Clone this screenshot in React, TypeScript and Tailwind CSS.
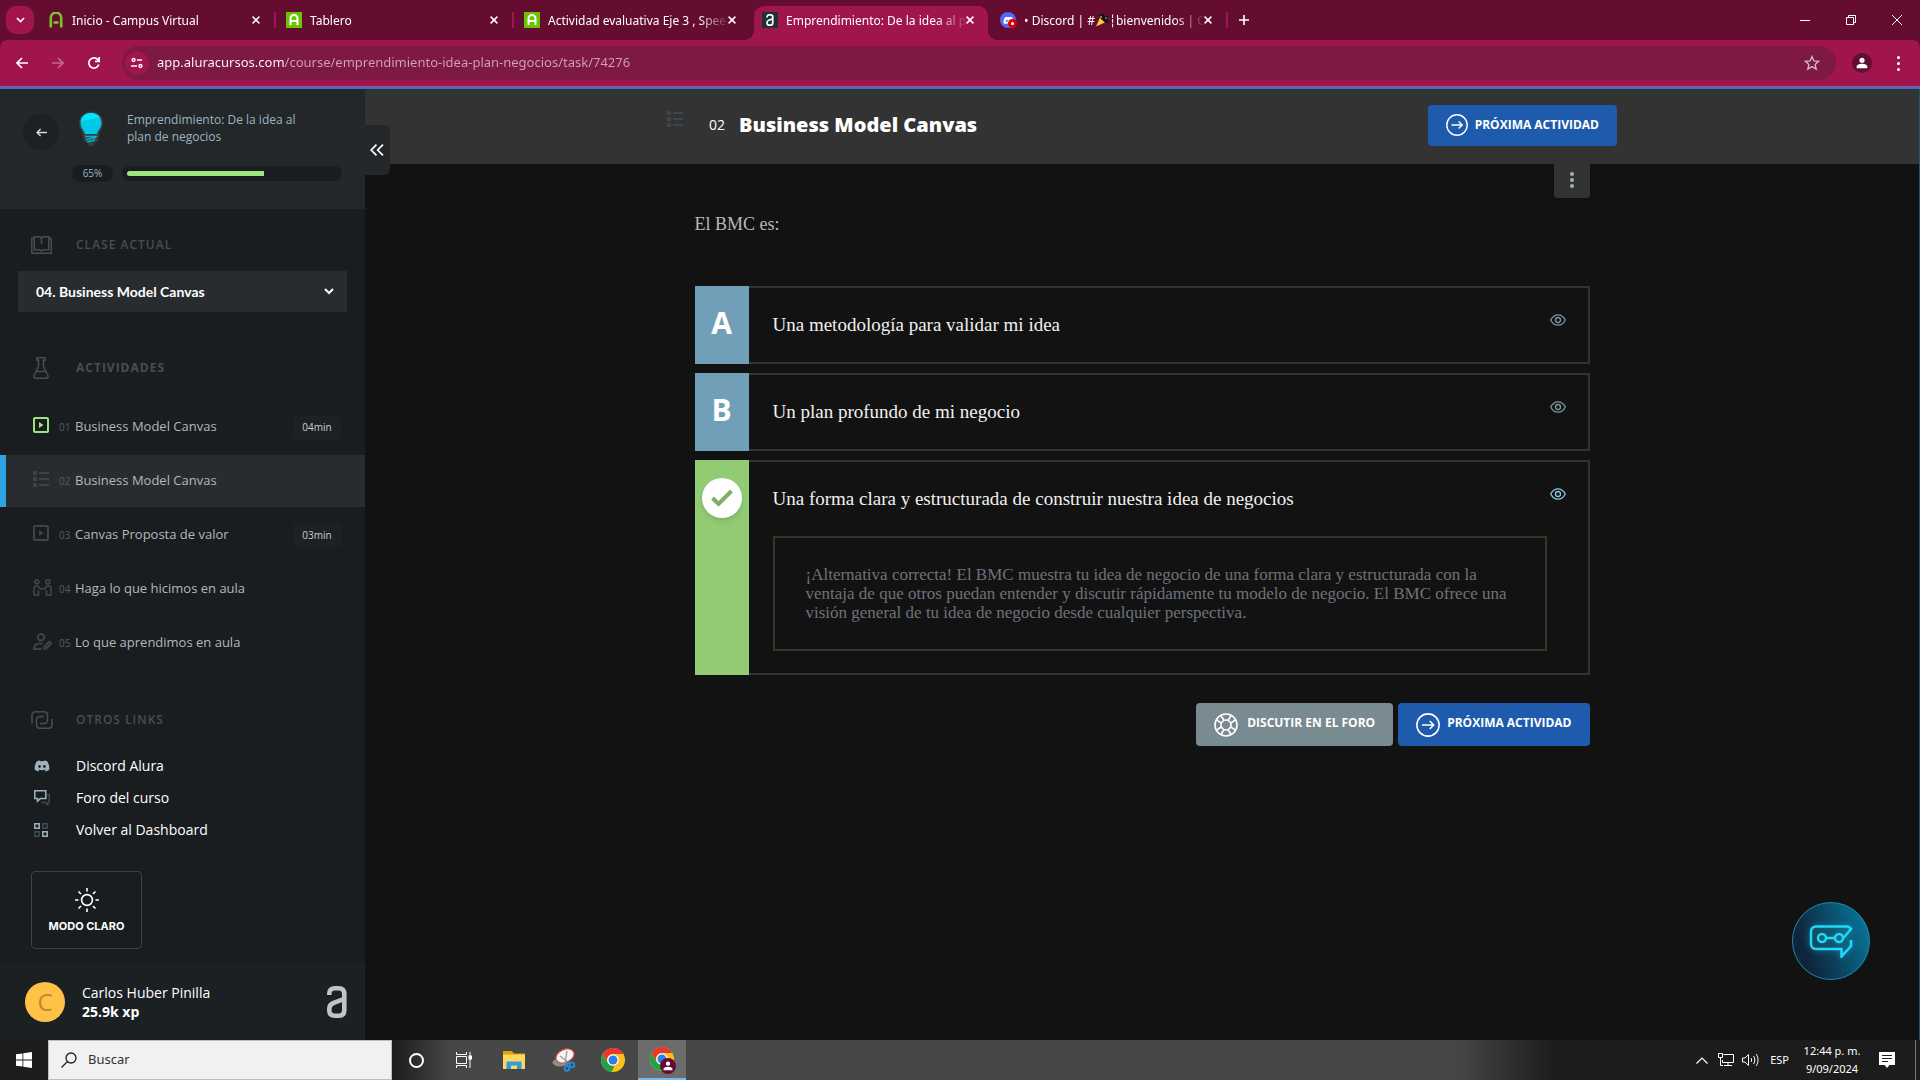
import React, { ReactNode } from "react";
import { FaDiscord } from "react-icons/fa";

/* ---------- Icons ---------- */

type IconProps = { className?: string };

const CloseIcon = ({ className = "" }: IconProps) => (
  <svg viewBox="0 0 8 8" className={className} fill="none" stroke="currentColor" strokeWidth="1.5">
    <path d="M.6.6l6.8 6.8M7.4.6L.6 7.4" />
  </svg>
);

const GreenA = ({ boxed }: { boxed?: boolean }) => (
  <svg viewBox="0 0 16 16" className="w-4 h-4 shrink-0" fill="none">
    {boxed && <rect width="16" height="16" fill="#6cc300" />}
    <path
      d={boxed ? "M4.5 13V6.5a3.5 3.5 0 0 1 7 0V13M4.5 9h7" : "M2.8 15.5V5.8a5.2 5.2 0 0 1 10.4 0v9.7M5.5 10.5h5"}
      stroke={boxed ? "#fff" : "#7cc32b"}
      strokeWidth={boxed ? 2 : 2.6}
    />
  </svg>
);

const AluraMark = ({ className = "" }: IconProps) => (
  <svg viewBox="0 0 20 32" className={className} fill="none" stroke="currentColor" strokeWidth="4.6">
    <path d="M2.3 9V7.500C2.300 4 4.500 2.300 8 2.300h3.500c4 0 5.800 2 5.800 5.700v16c0 3.700-1.800 5.700-5.300 5.700H8c-3.800 0-5.700-2-5.700-5.200v-2c0-3 1.500-4.600 4.400-5.700l10.600-4" />
  </svg>
);

const AluraFavicon = () => (
  <span className="flex w-4 h-4 shrink-0 items-center justify-center bg-[#1f3138] text-white">
    <AluraMark className="w-[8px] h-[12px]" />
  </span>
);

const DiscordFavicon = () => (
  <span className="relative w-4 h-4 shrink-0 rounded-full bg-[#5865f2] flex items-center justify-center">
    <FaDiscord className="w-[11px] h-[11px] text-white" />
    <span className="absolute -right-px bottom-0 w-[9px] h-[9px] rounded-full bg-[#e00000] flex items-center justify-center">
      <span className="w-[3px] h-[3px] rounded-full bg-white" />
    </span>
  </span>
);

const PartyPopper = () => (
  <svg viewBox="0 0 14 14" className="inline-block w-[14px] h-[14px] align-[-2px]">
    <path d="M1 13.500L5 4.500 10 9.500z" fill="#ffc83d" />
    <path d="M3 0l3 2.500 2-2.500 1.500 3 4 0-1.500 2.500L14 10l-4-.5L4.500 4.500z" fill="#16130f" />
    <circle cx="6" cy="4" r="1" fill="#e8a33d" />
    <circle cx="11" cy="5" r="1" fill="#3f8fd8" />
  </svg>
);

const ListIcon = () => (
  <svg viewBox="0 0 16 16" className="w-4 h-4" fill="currentColor">
    <rect width="4" height="4" rx=".5" />
    <rect y="6" width="4" height="4" rx=".5" />
    <rect y="12" width="4" height="4" rx=".5" />
    <rect x="6" y="1" width="10" height="2" />
    <rect x="6" y="7" width="10" height="2" />
    <rect x="6" y="13" width="10" height="2" />
  </svg>
);

const VideoIcon = () => (
  <svg viewBox="0 0 16 16" className="w-4 h-4">
    <rect x="1" y="1" width="14" height="14" rx="1" fill="none" stroke="currentColor" strokeWidth="2" />
    <path d="M6 5l4.500 3L6 11z" fill="currentColor" />
  </svg>
);

const PairIcon = () => (
  <svg viewBox="0 0 19 17" className="w-[19px] h-[17px]" fill="none" stroke="currentColor" strokeWidth="1.700">
    <circle cx="3.800" cy="2.800" r="2" />
    <circle cx="14.800" cy="2.800" r="2" />
    <path d="M1 16.200V9.500C1 7.500 2 6.800 3.600 6.800c1.700 0 2.400 1 3.400 2.900l2.500.2M1 16.200h4.500v-5M18 16.200V9.500c0-2-1-2.700-2.800-2.700-1.700 0-2.400 1-3.400 2.900l-2.300.2M18 16.200h-4.500v-5" />
  </svg>
);

const UserEditIcon = () => (
  <svg viewBox="0 0 19 17" className="w-[19px] h-[17px]" fill="none" stroke="currentColor" strokeWidth="2">
    <circle cx="8" cy="4.200" r="3.200" />
    <path d="M8.500 16H1c.3-3.500 2-5.400 5-5.400h3.500M11.200 16l.5-2.800 4.600-4.500 1.800 1.900-4.500 4.600z" />
  </svg>
);

const BookIcon = () => (
  <svg viewBox="0 0 21 18" className="w-[21px] h-[18px]" fill="none" stroke="currentColor" strokeWidth="1.500">
    <path d="M3 2.500H.8v14.700h19.400V2.500H18M3.300.8v13h5.500l1.700 1.200 1.700-1.200h5.500V.8h-5.500l-1.700 1.200L8.800.8zM10.500 2v6" />
  </svg>
);

const FlaskIcon = () => (
  <svg viewBox="0 0 16 22" className="w-4 h-[22px]" fill="none" stroke="currentColor" strokeWidth="1.500">
    <path d="M4 .8h8v2.400h-1.500v6.300l4.300 8.700c.7 1.600 0 3-1.500 3H2.700c-1.500 0-2.200-1.400-1.500-3l4.300-8.700V3.200H4zM3.500 14.500h9" />
  </svg>
);

const LinksIcon = () => (
  <svg viewBox="0 0 22 18" className="w-[22px] h-[18px]" fill="none" stroke="currentColor" strokeWidth="1.500">
    <path d="M1 12.500V4a3.200 3.200 0 0 1 3.200-3.200h9.100a3.200 3.200 0 0 1 3.200 3.200v5.200a3.200 3.200 0 0 1-3.200 3.200H9" />
    <path d="M13 5.500H8.700A3.200 3.200 0 0 0 5.500 8.700V14a3.200 3.200 0 0 0 3.200 3.200h9.100A3.200 3.200 0 0 0 21 14V8" />
  </svg>
);

const ForumIcon = () => (
  <svg viewBox="0 0 16 16" className="w-4 h-4" fill="none" strokeWidth="1.500">
    <path d="M13 4.800h2.300v7.700h-1.500v2.300l-2.600-2.300H7.500" stroke="#41494e" />
    <path d="M.8.8h11v7.800H6.300l-2.800 2.600V8.600H.8z" stroke="#9db4c0" />
  </svg>
);

const DashboardIcon = () => (
  <svg viewBox="0 0 14 14" className="w-[14px] h-[14px]" fill="none" strokeWidth="1.500">
    <path d="M.8.8h4.400v4.400H.8zM8.800 8.800h4.400v4.400H8.800z" stroke="#9db4c0" />
    <path d="M8.800.8h4.400v4.400H8.800zM.8 8.800h4.400v4.400H.8z" stroke="#41494e" />
  </svg>
);

const SunIcon = () => (
  <svg viewBox="0 0 24 24" className="w-6 h-6" fill="none" stroke="currentColor" strokeWidth="1.600">
    <circle cx="12" cy="12" r="5.400" />
    <path d="M12 0v3.500M12 20.500V24M0 12h3.500M20.500 12H24M3.500 3.500L6 6M18 18l2.500 2.500M3.500 20.500L6 18M18 6l2.500-2.500" />
  </svg>
);

const BulbIcon = () => (
  <svg viewBox="0 0 26 36" className="w-[26px] h-9">
    <path d="M13 .5C6 .5 1 5.500 1 12c0 4.500 2 7 3.500 10l1.500 8 4 2 1 3h4l1-3 4-2 1.500-8C23 19 25 16.500 25 12 25 5.500 20 .5 13 .5z" fill="#3a3f42" />
    <path d="M13 2C7 2 2.500 6.200 2.500 12c0 4.500 3.500 7 4.500 11h12c1-4 4.500-6.500 4.500-11C23.500 6.200 19 2 13 2z" fill="#00c8e6" />
    <path d="M13 2C7.500 2 3.300 5.500 2.700 10.500L22 6.500C20 3.600 17 2 13 2z" fill="#00e5ff" />
    <path d="M7 25.500h12M8 28.500l10-2M9 31l8-2" stroke="#00b4d8" strokeWidth="1.500" fill="none" />
  </svg>
);

const ArrowCircleIcon = ({ className = "" }: IconProps) => (
  <svg viewBox="0 0 22 22" className={className} fill="none" stroke="currentColor" strokeWidth="1.400">
    <circle cx="11" cy="11" r="10.200" />
    <path d="M5.500 11h10.700M12.600 7.400l3.600 3.600-3.600 3.600" />
  </svg>
);

const LifebuoyIcon = ({ className = "" }: IconProps) => (
  <svg viewBox="0 0 24 24" className={className} fill="none" stroke="currentColor" strokeWidth="1.600">
    <circle cx="12" cy="12" r="11" />
    <circle cx="12" cy="12" r="5" />
    <path d="M7.200 10L2.500 6.800M10 7.200L6.800 2.500M14 7.200l3.200-4.700M16.800 10l4.700-3.200M16.800 14l4.700 3.200M14 16.800l3.200 4.700M10 16.800l-3.200 4.700M7.200 14l-4.700 3.200" />
  </svg>
);

const EyeIcon = () => (
  <svg viewBox="0 0 16 12" className="w-4 h-3" fill="none" stroke="currentColor" strokeWidth="1.300">
    <path d="M.7 6C2.500 2.500 5 .8 8 .8S13.500 2.500 15.300 6C13.500 9.500 11 11.200 8 11.200S2.500 9.500.7 6z" />
    <circle cx="8" cy="6" r="2.500" />
  </svg>
);

const ChromeIcon = () => (
  <svg viewBox="0 0 24 24" className="w-6 h-6">
    <circle cx="12" cy="12" r="12" fill="#fbc116" />
    <path d="M1.600 6A12 12 0 0 1 22.400 6H12a6 6 0 0 0-5.200 9z" fill="#e8372c" />
    <path d="M1.600 6l5.200 9A6 6 0 0 0 12 18l1.500-.2L10.500 23.900A12 12 0 0 1 1.600 6z" fill="#1fa24a" />
    <circle cx="12" cy="12" r="5.800" fill="#fff" />
    <circle cx="12" cy="12" r="4.500" fill="#2f7de9" />
  </svg>
);

const PersonIcon = ({ className = "" }: IconProps) => (
  <svg viewBox="0 0 14 14" className={className} fill="currentColor">
    <circle cx="7" cy="3.800" r="3" />
    <path d="M.8 13v-2c0-2 4-3 6.200-3s6.200 1 6.200 3v2z" />
  </svg>
);

/* ---------- Browser ---------- */

const tabs: { id: string; title: ReactNode; icon: ReactNode; active?: boolean; line?: boolean }[] = [
  { id: "campus", title: "Inicio - Campus Virtual", icon: <GreenA />, line: true },
  { id: "tablero", title: "Tablero", icon: <GreenA boxed />, line: true },
  { id: "eje3", title: "Actividad evaluativa Eje 3 , Spee", icon: <GreenA boxed /> },
  { id: "alura", title: "Emprendimiento: De la idea al p", icon: <AluraFavicon />, active: true },
  {
    id: "discord",
    title: (
      <>
        • Discord | #<PartyPopper />┆bienvenidos | C
      </>
    ),
    icon: <DiscordFavicon />,
    line: true,
  },
];

function Browser() {
  return (
    <header className="font-['Noto_Sans',sans-serif] text-white">
      <div className="flex h-10 bg-[#640d30]">
        <div className="w-[38px] shrink-0 pl-[6px] pt-[6px]">
          <button aria-label="Buscar pestañas" className="flex w-7 h-7 items-center justify-center rounded-[10px] bg-[#a0154e]">
            <svg viewBox="0 0 10 6" className="w-[9px] h-[6px]" fill="none" stroke="currentColor" strokeWidth="1.800">
              <path d="M1 .8l4 4 4-4" />
            </svg>
          </button>
        </div>
        <div className="flex min-w-0">
          {tabs.map((tab) => (
            <div key={tab.id} className="relative w-[238px] pt-[6px]">
              <div
                className={`flex items-center h-[34px] pb-[6px] ${
                  tab.active ? "mx-[2px] pl-[8px] pr-[14px] rounded-t-[10px] bg-[#a0154e]" : "pl-[10px] pr-[16px]"
                }`}
              >
                {tab.icon}
                <a
                  href="#"
                  className="ml-2 pt-px flex-1 min-w-0 whitespace-nowrap text-xs [mask-image:linear-gradient(90deg,#000_150px,transparent_182px)]"
                >
                  {tab.title}
                </a>
                <button aria-label="Cerrar pestaña">
                  <CloseIcon className="w-2 h-2" />
                </button>
              </div>
              {tab.active && (
                <>
                  <span className="absolute bottom-0 -left-[8px] w-[10px] h-[10px] bg-[radial-gradient(circle_at_0_0,transparent_10px,#a0154e_10px)]" />
                  <span className="absolute bottom-0 -right-[8px] w-[10px] h-[10px] bg-[radial-gradient(circle_at_100%_0,transparent_10px,#a0154e_10px)]" />
                </>
              )}
              {tab.line && <span className="absolute right-0 top-3 w-[2px] h-4 bg-[#a0154e]" />}
            </div>
          ))}
          <button aria-label="Nueva pestaña" className="w-8 flex items-center justify-center">
            <svg viewBox="0 0 10 10" className="w-[10px] h-[10px]" stroke="currentColor" strokeWidth="1.600">
              <path d="M5 0v10M0 5h10" />
            </svg>
          </button>
        </div>
        <div className="ml-auto flex">
          <button aria-label="Minimizar" className="w-[46px] flex items-center justify-center">
            <span className="w-[10px] h-px bg-white" />
          </button>
          <button aria-label="Restaurar" className="w-[46px] flex items-center justify-center">
            <svg viewBox="0 0 10 10" className="w-[10px] h-[10px]" fill="none" stroke="currentColor">
              <path d="M.5 2.500h7v7h-7zM2.500 2.500v-2h7v7h-2" />
            </svg>
          </button>
          <button aria-label="Cerrar" className="w-[46px] flex items-center justify-center">
            <svg viewBox="0 0 10 10" className="w-[10px] h-[10px]" stroke="currentColor">
              <path d="M0 0l10 10M10 0L0 10" />
            </svg>
          </button>
        </div>
      </div>

      <div className="bg-[#640d30]">
        <div className="flex items-center h-[46px] rounded-t-lg bg-[#a0154e] pl-1 pr-1">
          <button aria-label="Atrás" className="w-9 flex justify-center">
            <svg viewBox="0 0 12 12" className="w-3 h-3" fill="none" stroke="currentColor" strokeWidth="1.600">
              <path d="M12 6H1M6 1L1 6l5 5" />
            </svg>
          </button>
          <button aria-label="Adelante" className="w-9 flex justify-center text-[#c46a90]">
            <svg viewBox="0 0 12 12" className="w-3 h-3" fill="none" stroke="currentColor" strokeWidth="1.600">
              <path d="M0 6h11M6 1l5 5-5 5" />
            </svg>
          </button>
          <button aria-label="Recargar" className="w-9 flex justify-center">
            <svg viewBox="0 0 12 12" className="w-3 h-3" fill="none" stroke="currentColor" strokeWidth="1.700">
              <path d="M10.800 7.500A5.100 5.100 0 1 1 9.800 2.600L11 4M11.200 0v4.300H7" />
            </svg>
          </button>
          <div className="ml-[10px] flex flex-1 items-center h-[34px] rounded-full bg-[#7d1942] pl-[3px] pr-4">
            <button aria-label="Información del sitio" className="flex w-6 h-6 items-center justify-center rounded-full bg-[#a0154e]">
              <svg viewBox="0 0 14 12" className="w-3 h-3" fill="none" stroke="currentColor" strokeWidth="1.600">
                <circle cx="3" cy="2.500" r="1.700" />
                <path d="M7 2.500h6M0 9.500h7" />
                <circle cx="11" cy="9.500" r="1.700" />
              </svg>
            </button>
            <input
              aria-label="Barra de direcciones"
              defaultValue="app.aluracursos.com/course/emprendimiento-idea-plan-negocios/task/74276"
              className="ml-2 flex-1 bg-[linear-gradient(90deg,#fff_128px,#d2a2b7_128px)] bg-clip-text text-transparent text-[13px] outline-none"
            />
            <button aria-label="Marcar esta página" className="text-[#d5b9c5]">
              <svg viewBox="0 0 16 16" className="w-4 h-4" fill="none" stroke="currentColor" strokeWidth="1.300">
                <path d="M8 1.500l1.900 4.400 4.800.4-3.600 3.100 1.100 4.700L8 11.600l-4.200 2.500 1.100-4.700-3.600-3.100 4.800-.4z" />
              </svg>
            </button>
          </div>
          <button aria-label="Perfil" className="ml-4 flex w-5 h-5 items-center justify-center rounded-full bg-[#640d30]">
            <PersonIcon className="w-3 h-3" />
          </button>
          <button aria-label="Menú" className="ml-2 w-9 flex flex-col items-center gap-[3px]">
            <span className="w-[3px] h-[3px] rounded-full bg-white" />
            <span className="w-[3px] h-[3px] rounded-full bg-white" />
            <span className="w-[3px] h-[3px] rounded-full bg-white" />
          </button>
        </div>
      </div>
      <div className="h-[3px] border-t border-[#b8487a] bg-[#2f76d2]" />
    </header>
  );
}

/* ---------- Sidebar ---------- */

const activities = [
  { num: "01", name: "Business Model Canvas", time: "04min", icon: <VideoIcon />, done: true },
  { num: "02", name: "Business Model Canvas", icon: <ListIcon />, current: true },
  { num: "03", name: "Canvas Proposta de valor", time: "03min", icon: <VideoIcon /> },
  { num: "04", name: "Haga lo que hicimos en aula", icon: <PairIcon /> },
  { num: "05", name: "Lo que aprendimos en aula", icon: <UserEditIcon /> },
];

const links = [
  { name: "Discord Alura", icon: <FaDiscord className="w-4 h-4 text-[#9db4c0]" /> },
  { name: "Foro del curso", icon: <ForumIcon /> },
  { name: "Volver al Dashboard", icon: <DashboardIcon /> },
];

function SectionTitle({ icon, bold, children }: { icon: ReactNode; bold?: boolean; children: ReactNode }) {
  return (
    <h2
      className={`flex items-center h-6 pl-[31px] text-xs tracking-[1px] text-[#454f53] ${
        bold ? "font-bold" : "font-semibold"
      }`}
    >
      <span className="w-[45px]">{icon}</span>
      {children}
    </h2>
  );
}

function Sidebar() {
  const progress = 65;

  return (
    <aside className="relative flex flex-col w-[365px] shrink-0 bg-[#191d20]">
      <div className="flex h-[120px] bg-[#23272a] pt-[22px] pl-[23px]">
        <a href="#" aria-label="Volver" className="mt-[3px] flex w-9 h-9 items-center justify-center rounded-full bg-[#1d2123] text-[#d6dcdf]">
          <svg viewBox="0 0 12 10" className="w-[11px] h-[9px]" fill="none" stroke="currentColor" strokeWidth="1.500">
            <path d="M12 5H1M5 1L1 5l4 4" />
          </svg>
        </a>
        <div className="ml-[13px] w-[270px]">
          <div className="flex">
            <span className="pl-[6px] w-[55px]">
              <BulbIcon />
            </span>
            <a href="#" className="w-[180px] text-xs leading-[17px] text-[#9db4c0]">
              Emprendimiento: De la idea al plan de negocios
            </a>
          </div>
          <div className="mt-[18px] flex items-center">
            <span className="w-[41px] h-[17px] rounded-full bg-[#191d20] text-center text-[10px] leading-[17px] text-[#9db4c0]">
              {progress}%
            </span>
            <div
              role="progressbar"
              aria-label="Progreso del curso"
              aria-valuenow={progress}
              className="ml-[9px] flex-1 h-[15px] rounded-full bg-[#191d20] p-[5px]"
            >
              <div className="h-[5px] rounded-l-full bg-[#9ee57d]" style={{ width: `${progress}%` }} />
            </div>
          </div>
        </div>
      </div>

      <button
        aria-label="Ocultar menú"
        className="absolute left-full top-9 z-10 flex w-[25px] h-[50px] items-center justify-center rounded-r-md bg-[#23272a] pr-[2px] text-white"
      >
        <svg viewBox="0 0 14 12" className="w-[14px] h-3" fill="none" stroke="currentColor" strokeWidth="1.700">
          <path d="M6.500.6L1.200 6l5.300 5.400M13 .6L7.700 6l5.300 5.400" />
        </svg>
      </button>

      <div className="pt-6">
        <SectionTitle icon={<BookIcon />}>CLASE ACTUAL</SectionTitle>
        <div className="relative mt-[14px] mx-[18px]">
          <select
            aria-label="Clase actual"
            className="w-full h-[41px] appearance-none bg-[#282c2f] pl-[18px] font-['Lato',sans-serif] text-sm font-bold text-white"
          >
            <option>04. Business Model Canvas</option>
          </select>
          <svg
            viewBox="0 0 10 7"
            className="pointer-events-none absolute right-[13px] top-[17px] w-[10px] h-[7px] text-white"
            fill="none"
            stroke="currentColor"
            strokeWidth="2"
          >
            <path d="M1 1l4 4 4-4" />
          </svg>
        </div>
      </div>

      <div className="mt-11">
        <SectionTitle bold icon={<span className="block pl-[2px]"><FlaskIcon /></span>}>
          ACTIVIDADES
        </SectionTitle>
        <ul className="mt-[21px] flex flex-col gap-[2px]">
          {activities.map((a) => (
            <li key={a.num}>
              <a
                href="#"
                className={`flex items-center h-[52px] border-l-[6px] pl-[27px] pr-6 ${
                  a.current ? "border-[#2fa4e2] bg-[#282c2f]" : "border-transparent"
                }`}
              >
                <span className={`w-[26px] pb-1 ${a.done ? "text-[#9ee57d]" : "text-[#3a444b]"}`}>{a.icon}</span>
                <span className="w-4 text-[10px] text-[#545c61]">{a.num}</span>
                <span className="text-[13px] text-[#b4b8ba]">{a.name}</span>
                {a.time && (
                  <span className="ml-auto w-12 h-6 rounded bg-[#1d2123] text-center text-[10px] leading-6 text-[#c9cdcf]">
                    {a.time}
                  </span>
                )}
              </a>
            </li>
          ))}
        </ul>
      </div>

      <div className="mt-[39px]">
        <SectionTitle icon={<LinksIcon />}>OTROS LINKS</SectionTitle>
        <ul className="mt-[18px]">
          {links.map((l) => (
            <li key={l.name}>
              <a href="#" className="flex items-center h-8 pl-[34px] text-sm text-white">
                <span className="w-[42px]">{l.icon}</span>
                {l.name}
              </a>
            </li>
          ))}
        </ul>
      </div>

      <button className="mt-[25px] ml-[31px] flex flex-col items-center w-[111px] h-[78px] rounded border border-[#3c4246] pt-4 text-white">
        <SunIcon />
        <span className="mt-[6px] font-['Inter',sans-serif] text-[11px] leading-4 font-bold">MODO CLARO</span>
      </button>

      <div className="mt-auto flex items-center h-[76px] bg-[#1b2123] pl-[25px] pr-[18px] text-sm leading-[19px] text-white">
        <span className="flex w-10 h-10 items-center justify-center rounded-full bg-[#ffc247] text-2xl text-[#c08a2c]">C</span>
        <p className="ml-[17px]">
          Carlos Huber Pinilla
          <br />
          <strong>25.9k xp</strong>
        </p>
        <AluraMark className="ml-auto w-5 h-8 text-[#bfc4c7]" />
      </div>
    </aside>
  );
}

/* ---------- Task ---------- */

const options = [
  { letter: "A", text: "Una metodología para validar mi idea" },
  { letter: "B", text: "Un plan profundo de mi negocio" },
  {
    letter: "C",
    text: "Una forma clara y estructurada de construir nuestra idea de negocios",
    feedback:
      "¡Alternativa correcta! El BMC muestra tu idea de negocio de una forma clara y estructurada con la ventaja de que otros puedan entender y discutir rápidamente tu modelo de negocio. El BMC ofrece una visión general de tu idea de negocio desde cualquier perspectiva.",
  },
];

function Task() {
  return (
    <main className="flex-1 bg-[#121212] border-r border-[#155a70]">
      <div className="h-[75px] bg-[#333333]">
        <div className="mx-auto flex items-center h-[72px] max-w-[950px] text-white">
          <span className="w-[42px] pb-3 text-[#3e474d]">
            <ListIcon />
          </span>
          <span className="w-[30px] text-sm font-medium">02</span>
          <h1 className="text-xl font-extrabold">Business Model Canvas</h1>
          <a href="#" className="ml-auto flex items-center h-[41px] rounded bg-[#1f5bac] px-[18px] text-xs font-bold">
            <ArrowCircleIcon className="w-[22px] h-[22px] mr-[7px]" />
            PRÓXIMA ACTIVIDAD
          </a>
        </div>
      </div>

      <div className="relative mx-auto max-w-[895px] pt-12">
        <button
          aria-label="Opciones"
          className="absolute right-0 top-0 flex flex-col w-9 h-[34px] items-center justify-center gap-[2px] rounded-b bg-[#333333] pb-[2px]"
        >
          <span className="w-1 h-1 rounded-full bg-[#9db4c0]" />
          <span className="w-1 h-1 rounded-full bg-[#9db4c0]" />
          <span className="w-1 h-1 rounded-full bg-[#9db4c0]" />
        </button>

        <p className="font-['Liberation_Serif',serif] text-lg leading-6 text-[#b9b9b9]">El BMC es:</p>

        <ul className="mt-[50px] flex flex-col gap-[9px]">
          {options.map((o) => (
            <li key={o.letter} className="flex">
              {o.feedback ? (
                <span className="w-[54px] flex justify-center bg-[#91cb74] pt-[18px]">
                  <span className="flex w-10 h-10 items-center justify-center rounded-full bg-white shadow-md">
                    <svg viewBox="0 0 22 18" className="w-[22px] h-[18px]" fill="none" stroke="#7fae68" strokeWidth="4">
                      <path d="M1.500 9l6 6L20.500 2" />
                    </svg>
                  </span>
                </span>
              ) : (
                <span className="w-[54px] flex items-center justify-center bg-[#729fb8] pb-1 text-3xl font-bold text-white">
                  {o.letter}
                </span>
              )}
              <div className="flex-1 border-2 border-l-0 border-[#333333] pl-6">
                <div className="flex h-[74px] items-center pr-[22px]">
                  <p className="font-['Liberation_Serif',serif] text-[19px] text-[#f0f0f0]">{o.text}</p>
                  <button aria-label="Ver opinión" className={`ml-auto pb-[10px] ${o.feedback ? "text-[#84c8e8]" : "text-[#7d97a3]"}`}>
                    <EyeIcon />
                  </button>
                </div>
                {o.feedback && (
                  <p className="mb-[22px] mr-[41px] border-2 border-[#2c3b25] px-[31px] py-[27px] font-['Liberation_Serif',serif] text-[17px] leading-[19px] text-[#6c737a]">
                    {o.feedback}
                  </p>
                )}
              </div>
            </li>
          ))}
        </ul>

        <div className="mt-7 flex justify-end gap-[5px] text-xs font-bold text-white">
          <a href="#" className="flex items-center h-[43px] rounded bg-[#7a8a91] px-[18px]">
            <LifebuoyIcon className="w-6 h-6 mr-[9px]" />
            <span className="pb-[3px]">DISCUTIR EN EL FORO</span>
          </a>
          <a href="#" className="flex items-center h-[43px] rounded bg-[#1f5bac] px-[18px]">
            <ArrowCircleIcon className="w-6 h-6 mr-[7px]" />
            <span className="pb-[3px]">PRÓXIMA ACTIVIDAD</span>
          </a>
        </div>
      </div>
    </main>
  );
}

/* ---------- Windows taskbar ---------- */

function Taskbar() {
  return (
    <footer className="flex h-10 bg-[linear-gradient(90deg,#1c1c1c_0,#1c1c1c_392px,#474747_450px,#454545_76%,#1c1c1c_81%)] font-['Noto_Sans',sans-serif] text-white">
      <button aria-label="Inicio" className="w-12 flex items-center justify-center">
        <svg viewBox="0 0 16 16" className="w-4 h-4" fill="currentColor">
          <path d="M0 2.300l6.500-.9v6.200H0zM7.300 1.300L16 0v7.600H7.300zM0 8.400h6.500v6.200L0 13.700zM7.300 8.400H16V16l-8.700-1.300z" />
        </svg>
      </button>
      <label className="flex items-center w-[344px] border border-[#bdbdbd] bg-[#f1f1f1] pl-3">
        <svg viewBox="0 0 16 16" className="w-4 h-4" fill="none" stroke="#222" strokeWidth="1.300">
          <circle cx="10" cy="6" r="5" />
          <path d="M6.500 9.500L.5 15.500" />
        </svg>
        <input aria-label="Buscar" placeholder="Buscar" className="ml-[11px] w-60 text-[13px] outline-none placeholder:text-[#333]" />
      </label>
      <button aria-label="Cortana" className="w-12 flex items-center justify-center">
        <span className="w-[15px] h-[15px] rounded-full border-2 border-white" />
      </button>
      <button aria-label="Vista de tareas" className="w-12 flex items-center justify-center">
        <svg viewBox="0 0 16 16" className="w-4 h-4" fill="none" stroke="currentColor">
          <path d="M.5 0v2.500h10V0M.5 16v-2.500h10V16M.5 4.500h10v7H.5zM14 0v16" />
          <rect x="13" y="4" width="2.500" height="3" fill="currentColor" />
        </svg>
      </button>
      <button aria-label="Explorador de archivos" className="w-[52px] flex items-center justify-center">
        <svg viewBox="0 0 22 18" className="w-[22px] h-[18px]">
          <path d="M0 0h9l2 2.500h11V18H0z" fill="#e3a008" />
          <path d="M0 3.500h22V18H0z" fill="#ffd75e" />
          <path d="M3.500 18v-7.500h15V18h-4.500v-3.500H8V18z" fill="#2f9be0" />
        </svg>
      </button>
      <button aria-label="Recortes" className="w-12 flex items-center justify-center">
        <svg viewBox="0 0 24 24" className="w-6 h-6" fill="none">
          <ellipse cx="8" cy="14.500" rx="7.500" ry="4" fill="#8d8d8d" />
          <ellipse cx="13" cy="8" rx="9.500" ry="6.500" transform="rotate(-25 13 8)" fill="#f4f4f4" stroke="#d9463e" strokeWidth="1.200" />
          <path d="M15 3l-2 12M8 8l9 7" stroke="#9a9a9a" strokeWidth="1.300" />
          <circle cx="15" cy="20.500" r="2.300" stroke="#1f8fdc" strokeWidth="1.800" />
          <circle cx="20" cy="17" r="2.300" stroke="#1f8fdc" strokeWidth="1.800" />
          <path d="M15 18l.8-4M18 16l-3.500-2.500" stroke="#1f8fdc" strokeWidth="1.800" />
        </svg>
      </button>
      <button aria-label="Chrome" className="w-[50px] flex items-center justify-center">
        <ChromeIcon />
      </button>
      <button aria-label="Chrome, perfil" className="relative w-12 flex items-center justify-center border-b-2 border-[#76b9ed] bg-[#6c6c6c]">
        <ChromeIcon />
        <span className="absolute right-[10px] bottom-1 flex w-4 h-4 items-center justify-center rounded-full bg-[#640d30]">
          <PersonIcon className="w-[10px] h-[10px]" />
        </span>
      </button>

      <div className="ml-auto flex items-center text-[11px]">
        <button aria-label="Mostrar iconos ocultos" className="w-6 flex justify-center">
          <svg viewBox="0 0 12 7" className="w-3 h-[7px]" fill="none" stroke="currentColor" strokeWidth="1.200">
            <path d="M.5 6.500L6 1l5.500 5.500" />
          </svg>
        </button>
        <svg viewBox="0 0 16 14" className="ml-1 w-4 h-[14px]" fill="none" stroke="currentColor">
          <path d="M5.500 1.500h10v8h-11V7M10 9.500v3M6 12.500h8M.5.500h4v4h-4zM2.500 4.500v8H5" />
        </svg>
        <svg viewBox="0 0 17 14" className="ml-2 w-[17px] h-[14px]" fill="none" stroke="currentColor">
          <path d="M.5 5v4H3l3.500 3.500v-11L3 5zM9 5c.8 1.200.8 2.800 0 4M11.500 3c1.800 2.300 1.800 5.700 0 8M14 1c2.700 3.500 2.700 8.500 0 12" />
        </svg>
        <span className="ml-[11px] text-[11px]">ESP</span>
        <p className="ml-3 w-[62px] text-center leading-[18px] whitespace-nowrap">
          12:44 p.&nbsp;m.
          <br />
          9/09/2024
        </p>
        <button aria-label="Notificaciones" className="ml-4">
          <svg viewBox="0 0 16 16" className="w-4 h-4">
            <path d="M0 0h16v13h-5.500L8 16l-2.500-3H0z" fill="#fff" />
            <path d="M3 3.500h10M3 6.500h10M3 9.500h6" stroke="#1c1c1c" />
          </svg>
        </button>
        <span className="ml-5 mr-1 w-px h-10 bg-[#777]" />
      </div>
    </footer>
  );
}

export default function App() {
  return (
    <div className="flex min-h-screen flex-col bg-[#121212]">
      <Browser />
      <div className="relative flex flex-1 font-['Open_Sans',sans-serif]">
        <Sidebar />
        <Task />
        <button
          aria-label="Asistente Luri"
          className="absolute right-[50px] bottom-[60px] flex w-[78px] h-[78px] items-center justify-center rounded-full border border-[#1590a8] bg-[linear-gradient(70deg,#10243c_20%,#0b4f6e_60%,#0680a6_100%)]"
        >
          <svg viewBox="0 0 44 34" className="w-[44px] h-[34px] drop-shadow-[0_0_3px_#22d3ee80]" fill="none" stroke="#22d9f5" strokeWidth="2.500">
            <path d="M34 14.500l8-9.500c-1-1.500-2-2.500-4-2.500H7A5 5 0 0 0 2 7.500V20a5 5 0 0 0 5 5h25.500v7.500L42 22v-6" />
            <circle cx="13" cy="14" r="4" />
            <circle cx="30" cy="14" r="4" />
            <path d="M17 14h9" />
          </svg>
        </button>
      </div>
      <Taskbar />
    </div>
  );
}
